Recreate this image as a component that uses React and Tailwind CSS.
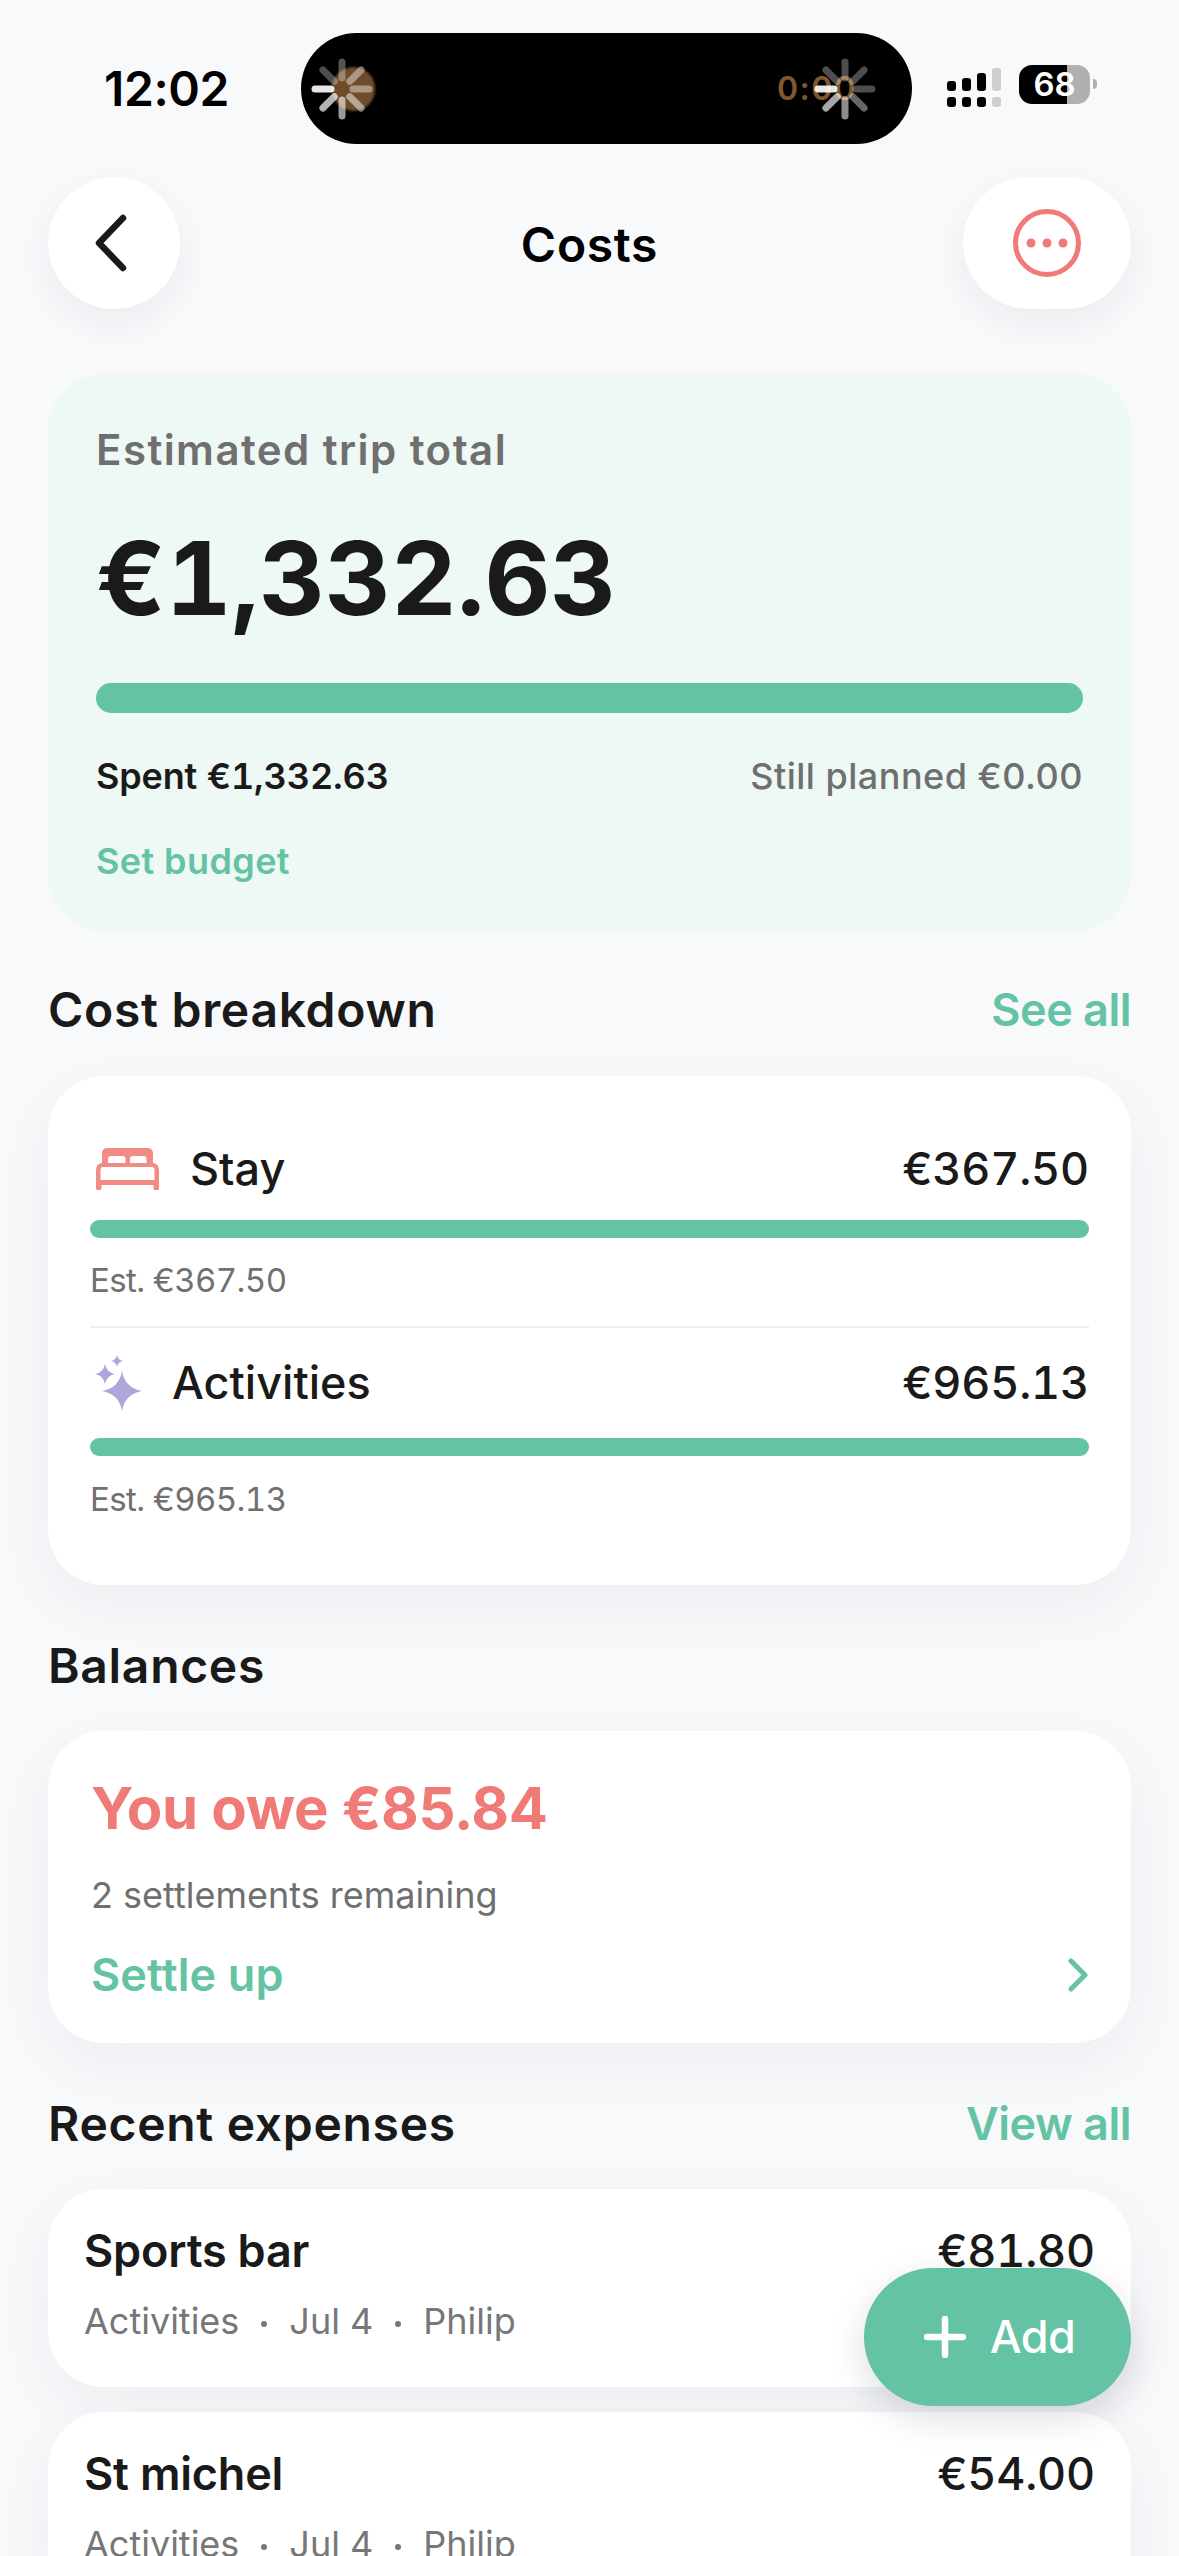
import React from "react";

function Spinner({ ops }) {
  return (
    <svg width="70" height="70" viewBox="-35 -35 70 70">
      {ops.map((o, i) => (
        <line key={i} x1="-11" y1="0" x2="-27" y2="0" stroke="#fff" strokeWidth="7" strokeLinecap="round" opacity={o} transform={`rotate(${-45 * i})`} />
      ))}
    </svg>
  );
}

function Signal() {
  return (
    <svg width="54" height="40" viewBox="0 0 54 40">
      <rect x="0" y="13" width="9" height="10" rx="3" fill="#000" />
      <rect x="15" y="10" width="9" height="13" rx="3" fill="#000" />
      <rect x="30" y="5" width="9" height="18" rx="3" fill="#000" />
      <rect x="45" y="0" width="9" height="23" rx="3" fill="#cfcfcf" />
      <rect x="0" y="29" width="9" height="10" rx="3" fill="#000" />
      <rect x="15" y="29" width="9" height="10" rx="3" fill="#000" />
      <rect x="30" y="29" width="9" height="10" rx="3" fill="#000" />
      <rect x="45" y="29" width="9" height="10" rx="3" fill="#cfcfcf" />
    </svg>
  );
}

function Bed() {
  return (
    <svg width="63" height="42" viewBox="0 0 63 42" className="shrink-0">
      <path
        fill="#F28B85"
        fillRule="evenodd"
        d="M11 0H52a5 5 0 0 1 5 5V15Q63 16 63 22V40.5a1.5 1.5 0 0 1-1.5 1.5H59a1.5 1.5 0 0 1-1.5-1.5V37H5.5V40.5A1.5 1.5 0 0 1 4 42H1.5A1.5 1.5 0 0 1 0 40.5V22Q0 16 6 15V5a5 5 0 0 1 5-5ZM15 8a3 3 0 0 0-3 3V15H29.5V11a3 3 0 0 0-3-3ZM37 8a3 3 0 0 0-3 3V15H50.5V11a3 3 0 0 0-3-3ZM7 19a2.5 2.5 0 0 0-2.5 2.5V32H58.5V21.5A2.5 2.5 0 0 0 56 19Z"
      />
    </svg>
  );
}

function Sparkle() {
  const star = (cx, cy, r, s) => `M${cx} ${cy - r}Q${cx + s} ${cy - s} ${cx + r} ${cy}Q${cx + s} ${cy + s} ${cx} ${cy + r}Q${cx - s} ${cy + s} ${cx - r} ${cy}Q${cx - s} ${cy - s} ${cx} ${cy - r}Z`;
  return (
    <svg width="46" height="57" viewBox="0 0 46 57" className="shrink-0">
      <path fill="#B0A6DE" d={star(27, 36, 20, 3)} />
      <path fill="#B0A6DE" d={star(10, 19, 10, 1.6)} />
      <path fill="#B0A6DE" d={star(22, 6, 6, 1)} />
    </svg>
  );
}

function Expense({ name, amount }) {
  return (
    <div className="bg-white rounded-[56px] h-[198px] px-[36px] pt-[35px] shadow-[0_20px_60px_rgba(20,30,50,0.05)]">
      <div className="flex justify-between text-[45px] leading-[54px] text-[#1a1a1a]">
        <span className="font-semibold tracking-[-0.2px]">{name}</span>
        <span className="font-medium tabular-nums tracking-[-0.2px]">{amount}</span>
      </div>
      <div className="mt-[21px] flex gap-[22px] text-[36px] leading-[44px] text-[#777777]">
        <span>Activities</span>
        <span className="mt-[22px] w-[6px] h-[6px] rounded-full bg-[#777777]"></span>
        <span>Jul 4</span>
        <span className="mt-[22px] w-[6px] h-[6px] rounded-full bg-[#777777]"></span>
        <span>Philip</span>
      </div>
    </div>
  );
}

export default function App() {
  return (
    <div className="relative h-[2556px] overflow-hidden bg-[#F8F9FB] px-[48px] pt-[33px] font-['Inter','Liberation_Sans',sans-serif] text-[#1a1a1a]">
      {/* status bar */}
      <div className="flex items-center h-[111px]">
        <span className="ml-[56px] w-[197px] text-[48px] leading-[58px] font-semibold text-black tracking-[-0.4px]">12:02</span>
        <div className="relative w-[611px] h-[111px] rounded-full bg-black">
          <div className="absolute left-[31px] top-[34px] w-[43px] h-[44px] rounded-full bg-[#6f4c2a] blur-[1px]"></div>
          <div className="absolute left-[6px] top-[21px]">
            <Spinner ops={[0.9, 0.7, 0.6, 0.5, 0.42, 0.42, 0.32, 0.3]} />
          </div>
          <span className="absolute left-[476px] top-[36px] text-[32px] leading-[40px] font-semibold text-[#80582f] tracking-[1.5px]">0:00</span>
          <div className="absolute left-[509px] top-[21px]">
            <Spinner ops={[0.9, 0.65, 0.55, 0.4, 0.3, 0.3, 0.3, 0.3]} />
          </div>
        </div>
        <div className="ml-[35px] mt-[-1px]"><Signal /></div>
        <div className="ml-[18px] mt-[-9px] flex items-center">
          <div className="w-[71px] h-[39px] rounded-[13px] flex items-center justify-center bg-[linear-gradient(90deg,#000_0,#000_48px,#b0b0b0_48px)] text-white text-[33px] leading-[39px] font-semibold">68</div>
          <div className="ml-[3px] w-[4px] h-[10px] rounded-r-full bg-[#b0b0b0]"></div>
        </div>
      </div>

      {/* nav */}
      <div className="mt-[33px] grid grid-cols-[168px_1fr_168px] items-center h-[132px]">
        <div className="w-[132px] h-[132px] rounded-full bg-white flex items-center justify-center shadow-[0_14px_36px_rgba(20,30,50,0.06)]">
          <svg width="40" height="60" viewBox="0 0 40 60" className="mr-[5px]">
            <path d="M31 5 L7 30 L31 55" fill="none" stroke="#1a1a1a" strokeWidth="6.5" strokeLinecap="round" strokeLinejoin="round" />
          </svg>
        </div>
        <div className="pt-[3px] text-center text-[48px] leading-[58px] font-semibold text-black tracking-[0.7px]">Costs</div>
        <div className="w-[168px] h-[132px] rounded-full bg-white flex items-center justify-center shadow-[0_14px_36px_rgba(20,30,50,0.06)]">
          <svg width="70" height="70" viewBox="0 0 70 70">
            <circle cx="35" cy="35" r="31.5" fill="none" stroke="#F07A76" strokeWidth="5" />
            <circle cx="19" cy="35" r="4.5" fill="#F07A76" />
            <circle cx="35" cy="35" r="4.5" fill="#F07A76" />
            <circle cx="51" cy="35" r="4.5" fill="#F07A76" />
          </svg>
        </div>
      </div>

      {/* hero */}
      <div className="mt-[65px] h-[557px] rounded-[56px] bg-[#EEF8F4] px-[48px] pt-[51px]">
        <div className="text-[42px] leading-[50px] font-semibold text-[#6f6f6f] tracking-[1.45px]">Estimated trip total</div>
        <div className="mt-[48px] text-[102px] leading-[110px] font-bold tabular-nums">€1,332.63</div>
        <div className="mt-[50px] h-[30px] rounded-full bg-[#64C3A4]"></div>
        <div className="mt-[41px] flex justify-between text-[36px] leading-[44px]">
          <span className="font-semibold tabular-nums tracking-[-0.15px]">Spent €1,332.63</span>
          <span className="font-medium text-[#6f6f6f] tracking-[0.5px]">Still planned €0.00</span>
        </div>
        <div className="mt-[41px] text-[36px] leading-[44px] font-semibold text-[#64C3A4] tracking-[0.4px]">Set budget</div>
      </div>

      {/* breakdown */}
      <div className="mt-[50px] flex justify-between items-center">
        <span className="text-[48px] leading-[58px] font-semibold tracking-[0.7px]">Cost breakdown</span>
        <span className="text-[45px] leading-[58px] font-semibold text-[#64C3A4] tracking-[-0.5px]">See all</span>
      </div>
      <div className="mt-[37px] rounded-[56px] bg-white px-[42px] pt-[66px] pb-[66px] shadow-[0_20px_60px_rgba(20,30,50,0.05)]">
        <div className="flex items-center h-[54px] text-[45px] leading-[54px] font-medium">
          <div className="pl-[6px] mr-[31px]"><Bed /></div>
          <span>Stay</span>
          <span className="ml-auto tabular-nums tracking-[-0.2px]">€367.50</span>
        </div>
        <div className="mt-[24px] h-[18px] rounded-full bg-[#64C3A4]"></div>
        <div className="mt-[22px] text-[33px] leading-[40px] text-[#707070] tabular-nums tracking-[-0.6px]">Est. €367.50</div>
        <div className="mt-[26px] h-[2px] bg-[#EEEEF0]"></div>
        <div className="mt-[28px] flex items-center h-[54px] text-[45px] leading-[54px] font-medium">
          <div className="pl-[5px] mr-[31px]"><Sparkle /></div>
          <span>Activities</span>
          <span className="ml-auto tabular-nums tracking-[-0.2px]">€965.13</span>
        </div>
        <div className="mt-[28px] h-[18px] rounded-full bg-[#64C3A4]"></div>
        <div className="mt-[23px] text-[33px] leading-[40px] text-[#707070] tabular-nums tracking-[-0.6px]">Est. €965.13</div>
      </div>

      {/* balances */}
      <div className="mt-[52px] text-[48px] leading-[58px] font-semibold tracking-[0.7px]">Balances</div>
      <div className="mt-[36px] rounded-[56px] bg-white px-[43px] pt-[42px] pb-[41px] shadow-[0_20px_60px_rgba(20,30,50,0.05)]">
        <div className="text-[58px] leading-[71px] font-bold text-[#F07A76] tracking-[-0.3px]">You owe €85.84</div>
        <div className="mt-[29px] text-[36px] leading-[44px] text-[#6f6f6f]">2 settlements remaining</div>
        <div className="mt-[31px] flex items-center justify-between text-[45px] leading-[54px] font-semibold text-[#64C3A4]">
          <span className="tracking-[0.1px]">Settle up</span>
          <svg width="20" height="34" viewBox="0 0 20 34">
            <path d="M3 3 L17 17 L3 31" fill="none" stroke="#64C3A4" strokeWidth="5" strokeLinecap="round" strokeLinejoin="round" />
          </svg>
        </div>
      </div>

      {/* recent */}
      <div className="mt-[52px] flex justify-between items-center">
        <span className="text-[48px] leading-[58px] font-semibold tracking-[0.7px]">Recent expenses</span>
        <span className="text-[45px] leading-[58px] font-semibold text-[#64C3A4] tracking-[-0.5px]">View all</span>
      </div>
      <div className="mt-[36px] flex flex-col gap-[25px]">
        <Expense name="Sports bar" amount="€81.80" />
        <Expense name="St michel" amount="€54.00" />
      </div>

      {/* floating add */}
      <div className="absolute left-[864px] top-[2268px] w-[267px] h-[138px] rounded-[69px] bg-[#64C3A4] flex items-center justify-center gap-[24px] pl-[4px] shadow-[0_12px_36px_rgba(20,30,50,0.14)]">
        <svg width="42" height="42" viewBox="0 0 42 42">
          <path d="M21 3V39M3 21H39" stroke="#fff" strokeWidth="6.5" strokeLinecap="round" fill="none" />
        </svg>
        <span className="text-[45px] leading-[54px] font-medium tracking-[-0.5px] text-white">Add</span>
      </div>
    </div>
  );
}
